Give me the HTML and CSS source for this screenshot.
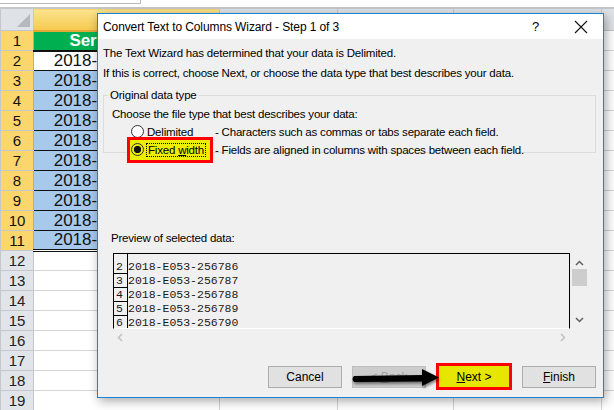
FILE: index.html
```html
<!DOCTYPE html>
<html lang="en">
<head>
    <meta charset="UTF-8">
    <title>Convert Text to Columns Wizard</title>
    <link rel="stylesheet" href="styles.css">
</head>
<body>

<!-- Worksheet behind the dialog -->
<div class="sheet">
    <div class="formula-bar"><span class="name-tab"></span></div>
    <table class="grid">
        <colgroup>
            <col class="c-head"><col class="c-b"><col class="c-c"><col class="c-d"><col class="c-e"><col class="c-f">
        </colgroup>
        <tr class="col-heads">
            <th class="corner"><span class="corner-tri"></span></th>
            <th class="sel">B</th><th>C</th><th>D</th><th>E</th><th></th>
        </tr>
        <tr><th class="row-head sel">1</th><td class="title">Serial Number</td><td></td><td></td><td></td><td></td></tr>
        <tr><th class="row-head sel">2</th><td class="data active">2018-E053-256786</td><td></td><td></td><td></td><td></td></tr>
        <tr><th class="row-head sel">3</th><td class="data">2018-E053-256787</td><td></td><td></td><td></td><td></td></tr>
        <tr><th class="row-head sel">4</th><td class="data">2018-E053-256788</td><td></td><td></td><td></td><td></td></tr>
        <tr><th class="row-head sel">5</th><td class="data">2018-E053-256789</td><td></td><td></td><td></td><td></td></tr>
        <tr><th class="row-head sel">6</th><td class="data">2018-E053-256790</td><td></td><td></td><td></td><td></td></tr>
        <tr><th class="row-head sel">7</th><td class="data">2018-E053-256791</td><td></td><td></td><td></td><td></td></tr>
        <tr><th class="row-head sel">8</th><td class="data">2018-E053-256792</td><td></td><td></td><td></td><td></td></tr>
        <tr><th class="row-head sel">9</th><td class="data">2018-E053-256793</td><td></td><td></td><td></td><td></td></tr>
        <tr><th class="row-head sel">10</th><td class="data">2018-E053-256794</td><td></td><td></td><td></td><td></td></tr>
        <tr><th class="row-head sel">11</th><td class="data last">2018-E053-256795</td><td></td><td></td><td></td><td></td></tr>
        <tr><th class="row-head">12</th><td></td><td></td><td></td><td></td><td></td></tr>
        <tr><th class="row-head">13</th><td></td><td></td><td></td><td></td><td></td></tr>
        <tr><th class="row-head">14</th><td></td><td></td><td></td><td></td><td></td></tr>
        <tr><th class="row-head">15</th><td></td><td></td><td></td><td></td><td></td></tr>
        <tr><th class="row-head">16</th><td></td><td></td><td></td><td></td><td></td></tr>
        <tr><th class="row-head">17</th><td></td><td></td><td></td><td></td><td></td></tr>
        <tr><th class="row-head">18</th><td></td><td></td><td></td><td></td><td></td></tr>
        <tr><th class="row-head">19</th><td></td><td></td><td></td><td></td><td></td></tr>
    </table>
</div>

<!-- The wizard dialog -->
<div class="dialog">
    <div class="title-bar">
        <span class="title">Convert Text to Columns Wizard - Step 1 of 3</span>
        <span class="title-btn help">?</span>
        <span class="title-btn close">
            <svg width="14" height="14" viewBox="0 0 14 14"><path d="M1 1 L13 13 M13 1 L1 13" stroke="#111" stroke-width="1.1" fill="none"/></svg>
        </span>
    </div>

    <div class="dialog-body">
        <p class="line">The Text Wizard has determined that your data is Delimited.</p>
        <p class="line">If this is correct, choose Next, or choose the data type that best describes your data.</p>

        <fieldset class="group">
            <legend>Original data type</legend>
            <p class="choose">Choose the file type that best describes your data:</p>
            <div class="option">
                <span class="opt-label"><span class="radio"></span><span class="opt-text"><u>D</u>elimited</span></span>
                <span class="opt-desc">- Characters such as commas or tabs separate each field.</span>
            </div>
            <div class="option second">
                <span class="opt-label marked"><span class="radio on"></span><span class="opt-text focus">Fixed <u>w</u>idth</span></span>
                <span class="opt-desc">- Fields are aligned in columns with spaces between each field.</span>
            </div>
        </fieldset>

        <p class="preview-label">Preview of selected data:</p>
        <div class="preview">
            <div class="preview-main">
                <div class="preview-list">
                    <div class="prow"><span class="pnum">2</span><span class="ptext">2018-E053-256786</span></div>
                    <div class="prow"><span class="pnum">3</span><span class="ptext">2018-E053-256787</span></div>
                    <div class="prow"><span class="pnum">4</span><span class="ptext">2018-E053-256788</span></div>
                    <div class="prow"><span class="pnum">5</span><span class="ptext">2018-E053-256789</span></div>
                    <div class="prow"><span class="pnum">6</span><span class="ptext">2018-E053-256790</span></div>
                    <div class="prow"><span class="pnum">7</span><span class="ptext">2018-E053-256791</span></div>
                </div>
                <div class="vscroll">
                    <svg width="9" height="6" viewBox="0 0 9 6"><path d="M1 5 L4.5 1.5 L8 5" stroke="#606060" stroke-width="1.5" fill="none"/></svg>
                    <span class="thumb"></span>
                    <svg class="down" width="9" height="6" viewBox="0 0 9 6"><path d="M1 1 L4.5 4.5 L8 1" stroke="#606060" stroke-width="1.5" fill="none"/></svg>
                </div>
            </div>
            <div class="hscroll">
                <svg width="6" height="9" viewBox="0 0 6 9"><path d="M5 1 L1.5 4.5 L5 8" stroke="#c0c0c0" stroke-width="1.5" fill="none"/></svg>
                <svg width="6" height="9" viewBox="0 0 6 9"><path d="M1 1 L4.5 4.5 L1 8" stroke="#c0c0c0" stroke-width="1.5" fill="none"/></svg>
            </div>
        </div>

        <div class="buttons">
            <button class="btn">Cancel</button>
            <button class="btn disabled">&lt; <u>B</u>ack</button>
            <button class="btn next"><u>N</u>ext &gt;</button>
            <button class="btn"><u>F</u>inish</button>
            <!-- annotation arrow pointing at Next -->
            <svg class="arrow" width="94" height="32" viewBox="0 0 94 32">
                <defs>
                    <filter id="sh" x="-10%" y="-40%" width="120%" height="180%">
                        <feGaussianBlur in="SourceAlpha" stdDeviation="1.5"/>
                        <feOffset dx="1" dy="2"/>
                        <feComponentTransfer><feFuncA type="linear" slope="0.5"/></feComponentTransfer>
                        <feMerge><feMergeNode/><feMergeNode in="SourceGraphic"/></feMerge>
                    </filter>
                </defs>
                <path d="M5 15 L73 14 L73 8 L90 16.5 L73 25 L73 20.5 L5 21 Q2 18 5 15 Z" fill="#000" filter="url(#sh)"/>
            </svg>
        </div>
    </div>
</div>

</body>
</html>
```

FILE: styles.css
```css
body {
    margin: 0;
    width: 614px;
    height: 410px;
    overflow: hidden;
    position: relative;
    background: #fff;
    font-family: "Liberation Sans", Arial, sans-serif;
}

/* ---------- worksheet ---------- */
.formula-bar {
    height: 7px;
    border-bottom: 1px solid #c6c6c6;
    background: #fff;
    position: relative;
}
.name-tab {
    position: absolute;
    left: 0;
    top: 0;
    width: 140px;
    height: 3px;
    border-bottom: 1px solid #b9b9b9;
    border-right: 1px solid #b9b9b9;
}
.grid {
    border-collapse: collapse;
    table-layout: fixed;
    width: 640px;
}
.c-head { width: 33px; }
.c-b { width: 186px; }
.c-c { width: 118px; }
.c-d { width: 116px; }
.c-e { width: 148px; }
.c-f { width: 39px; }

.grid tr {
    height: 20px;
}
.grid tr.col-heads {
    height: 22px;
}
.grid td, .grid th {
    padding: 0;
    line-height: 16px;
    border: 1px solid #d4d4d4;
    overflow: hidden;
    white-space: nowrap;
}
.col-heads th {
    background: #dfe2e6;
    border-color: #c4c7cb;
    font-weight: normal;
    color: transparent;
}
.col-heads th.sel {
    background: linear-gradient(#fbe38e, #f6c94f);
    border-bottom: 2px solid #e2a93a;
}
.corner {
    position: relative;
}
.corner-tri {
    position: absolute;
    right: 3px;
    bottom: 3px;
    width: 0;
    height: 0;
    border-left: 13px solid transparent;
    border-bottom: 13px solid #b5b8bc;
}
.row-head {
    background: #e1e4e8;
    border-color: #c4c7cb !important;
    color: #222;
    font-weight: normal;
    font-size: 15px;
    text-align: center;
}
.row-head.sel {
    background: #fad66c;
    border-right: 1px solid #e2a93a !important;
    color: #111;
}
.grid td.title {
    background: #00b050;
    color: #fff;
    font-weight: bold;
    font-size: 17px;
    text-align: center;
    border-bottom: 1px solid #e26ba0;
}
.grid td.data {
    background: #a6c9ec;
    font-size: 17px;
    text-align: center;
    color: #111;
    border: 1px solid #111;
}
.grid td.data.active {
    background: #fff;
    border-top: 2px solid #111;
}
.grid td.data.last {
    border-bottom: 3px double #111;
}

/* ---------- dialog ---------- */
.dialog {
    position: absolute;
    left: 97px;
    top: 13px;
    width: 505px;
    height: 383px;
    border: 1px solid #1883d7;
    background: #f0f0f0;
    box-shadow: 2px 3px 10px rgba(0, 0, 0, 0.35);
    font-size: 11.5px;
    letter-spacing: -0.2px;
    color: #000;
    display: flex;
    flex-direction: column;
}
.title-bar {
    height: 25px;
    background: #fff;
    display: flex;
    align-items: center;
    padding-left: 5px;
}
.title {
    flex: 1;
    font-size: 12px;
    letter-spacing: -0.1px;
}
.title-btn {
    width: 45px;
    text-align: center;
}
.help {
    font-size: 13px;
}
.close svg {
    display: block;
    margin: 0 auto;
}
.dialog-body {
    flex: 1;
    padding: 4px 7px 0 5px;
    display: flex;
    flex-direction: column;
    position: relative;
}
.line {
    margin: 0;
    height: 20px;
    line-height: 20px;
}
.group {
    margin: 6px 0 0 0;
    padding: 4px 0 0 8px;
    border: 1px solid #dcdcdc;
    height: 58px;
    min-width: 0;
}
.group legend {
    padding: 0 2px;
    margin-left: -4px;
}
.choose {
    margin: 0;
    height: 17px;
    line-height: 18px;
}
.option {
    display: flex;
    align-items: center;
    height: 19px;
    padding-left: 15px;
}
.option.second {
    margin-top: -1px;
}
.opt-label {
    display: flex;
    align-items: center;
    width: 86px;
    height: 19px;
    box-sizing: border-box;
    padding-left: 4px;
}
.opt-label.marked {
    background: #eded00;
    border: 3px solid #f00;
    height: 26px;
    padding-left: 1px;
}
.radio {
    width: 11px;
    height: 11px;
    border: 1px solid #333;
    border-radius: 50%;
    background: #fff;
    margin-right: 3px;
    flex: none;
}
.radio.on {
    background: radial-gradient(circle, #111 0, #111 3.4px, transparent 3.9px);
}
.opt-text.focus {
    outline: 1px dotted #000;
    outline-offset: 0;
    padding: 0 1px;
}
.opt-desc {
    margin-left: 2px;
}
.preview-label {
    margin: 76px 0 0 8px;
    height: 18px;
    line-height: 18px;
}
.preview {
    margin: 6px 0 0 10px;
    width: 476px;
    height: 92px;
    display: flex;
    flex-direction: column;
}
.preview-main {
    display: flex;
    height: 76px;
}
.preview-list {
    width: 457px;
    height: 76px;
    box-sizing: border-box;
    border: 1px solid #000;
    border-bottom: 1px solid #fff;
    overflow: hidden;
    padding-top: 6px;
    background: linear-gradient(to right, transparent 13px, #000 13px, #000 14px, transparent 14px);
    font-family: "Liberation Mono", "Courier New", monospace;
    font-size: 11.5px;
    letter-spacing: 0;
    color: #1a1a1a;
}
.prow {
    display: flex;
    height: 14px;
    line-height: 14px;
}
.pnum {
    width: 14px;
    box-sizing: border-box;
    border-bottom: 1px solid #000;
    padding-left: 2px;
    flex: none;
}
.vscroll {
    width: 17px;
    margin-left: 1px;
    display: flex;
    flex-direction: column;
    align-items: center;
    padding-top: 7px;
}
.thumb {
    display: block;
    width: 15px;
    height: 17px;
    background: #cdcdcd;
    margin-top: 3px;
}
.vscroll .down {
    margin-top: auto;
    margin-bottom: 6px;
}
.hscroll {
    width: 457px;
    height: 16px;
    display: flex;
    justify-content: space-between;
    align-items: center;
    padding: 0 4px;
    box-sizing: border-box;
}
.buttons {
    margin-top: 18px;
    display: flex;
    justify-content: flex-end;
    align-items: center;
    gap: 10px;
    position: relative;
}
.btn {
    width: 74px;
    height: 22px;
    border: 1px solid #adadad;
    background: #e1e1e1;
    font-family: inherit;
    font-size: 12px;
    color: #000;
    padding: 0;
}
.btn.disabled {
    background: #cccccc;
    border-color: #bfbfbf;
    color: #a0a0a0;
}
.btn.next {
    width: 76px;
    height: 27px;
    background: #e6e600;
    border: 3px solid #f00;
}
.arrow {
    position: absolute;
    left: 246px;
    top: -2px;
}
```
